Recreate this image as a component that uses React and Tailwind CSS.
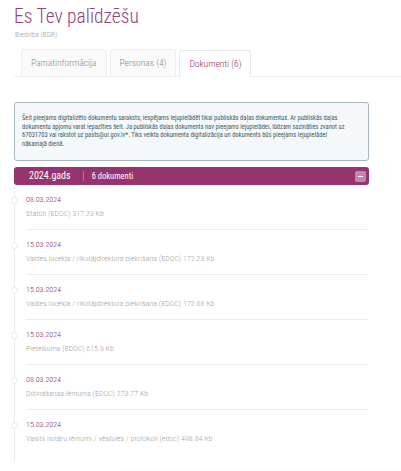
const docs = [
  { date: "08.03.2024", name: "Statūti (EDOC) 317.23 Kb" },
  { date: "15.03.2024", name: "Valdes locekļa / rīkotājdirektora piekrišana (EDOC) 172.23 Kb" },
  { date: "15.03.2024", name: "Valdes locekļa / rīkotājdirektora piekrišana (EDOC) 172.66 Kb" },
  { date: "15.03.2024", name: "Pieteikums (EDOC) 615.9 Kb" },
  { date: "08.03.2024", name: "Dibināšanas lēmums (EDOC) 273.77 Kb" },
  { date: "15.03.2024", name: "Valsts notāru lēmumi / vēstules / protokoli (edoc) 498.84 Kb" },
];

const tabs = [
  { id: "main", label: "Pamatinformācija" },
  { id: "persons", label: "Personas (4)" },
  { id: "docs", label: "Dokumenti (6)", active: true },
];

export default function App() {
  return (
    <div className="min-h-[471px] w-[401px] overflow-hidden bg-white font-['Roboto_Condensed','Roboto',sans-serif] font-light">
      <div className="pl-[14px] pt-[5px]">
        <h1 className="text-[19.5px] font-light leading-[24px] text-[#8b4777]">Es Tev palīdzēšu</h1>
        <p className="mt-[1px] pl-px text-[7.5px] leading-[9px] text-[#a0a0a0]">Biedrība (BDR)</p>

        <nav className="mt-[10px] flex items-end gap-[3px] border-b border-[#efefef] pl-[7px]">
          {tabs.map((t) => (
            <div
              key={t.id}
              className={`-mb-px flex h-[27px] items-center rounded-t-[3px] border border-b-0 text-[9.5px] ${
                t.active
                  ? "border-[#e8e8e8] bg-white px-[9px] text-[#8a2e63]"
                  : "mb-0 h-[26px] border-[#eeeeee] bg-[#fafafa] px-[9px] text-[#6f8f9b]"
              }`}
            >
              {t.label}
            </div>
          ))}
        </nav>
      </div>

      <div className="mt-[25px] w-[369px] pl-[14px]">
        <div className="rounded-[3px] border border-[#a9b8c0] bg-[#f4f8fa] px-[7px] pb-[12px] pt-[11px] text-[6.5px] font-normal leading-[8.6px] text-[#3d5a66]">
          Šeit pieejams digitalizēto dokumentu saraksts; iespējams lejupielādēt tikai publiskās daļas dokumentus. Ar publiskās daļas
          <br />
          dokumentu apjomu varat iepazīties šeit. Ja publiskās daļas dokuments nav pieejams lejupielādei, lūdzam sazināties zvanot uz
          <br />
          67031703 vai rakstot uz pasts@ur.gov.lv*. Tiks veikta dokumenta digitalizācija un dokuments būs pieejams lejupielādei
          <br />
          nākamajā dienā.
        </div>

        <div className="mt-[6px] flex h-[18px] items-center rounded-[3px] bg-[#963470] pl-[15px] pr-[3px] text-white">
          <span className="text-[10px] font-normal leading-none">2024.gads</span>
          <span className="ml-[12px] mr-[8px] h-[10px] w-px bg-white/30"></span>
          <span className="text-[8.5px] font-normal leading-none">6 dokumenti</span>
          <span className="ml-auto flex h-[11px] w-[11px] items-center justify-center rounded-[2px] bg-[#c583ad]">
            <span className="h-[1.5px] w-[5px] bg-white"></span>
          </span>
        </div>

        <div className="border-l border-[#ececec] pb-[8px]">
          {docs.map((d, i) => (
            <div key={i} className="relative ml-[11px]">
              <span className="absolute left-[-15px] top-[11.5px] h-[7px] w-[7px] rounded-full border border-[#e8e8e8] bg-white"></span>
              <div className={`pb-[10px] pt-[10px] ${i < docs.length - 1 ? "border-b border-[#ececec]" : ""}`}>
                <div className="text-[8px] leading-[10px] text-[#7a2d5c]">{d.date}</div>
                <div className="mt-[4px] text-[8px] leading-[10px] text-[#a3a3a3]">{d.name}</div>
              </div>
            </div>
          ))}
        </div>
      </div>

      <div className="ml-[120px] mt-[5px] h-[12px] bg-gradient-to-b from-white to-[#f1f1f1]"></div>
    </div>
  );
}
